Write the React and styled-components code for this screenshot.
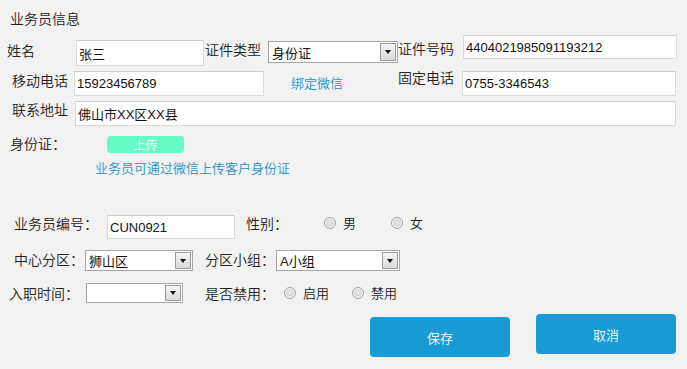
import React from "react";
import styled, { createGlobalStyle } from "styled-components";

const Global = createGlobalStyle`
  html, body { margin: 0; padding: 0; background: #f2f2f2; }
  body { font-family: "Noto Sans CJK SC", "Liberation Sans", sans-serif; }
  * { box-sizing: border-box; }
`;

const Page = styled.div`
  width: 687px;
  height: 369px;
  background: #f2f2f2;
  padding-top: 10px;
  overflow: hidden;
  font-weight: 350;
`;

const Title = styled.div`
  font-size: 14px;
  line-height: 16px;
  color: #222;
  padding-left: 10px;
`;

const Row = styled.div`
  display: flex;
  align-items: flex-start;
  height: ${(p) => p.$h}px;
  margin-top: ${(p) => p.$mt || 0}px;
  padding-left: ${(p) => p.$pl || 0}px;
`;

const Label = styled.div`
  flex: none;
  font-size: 14px;
  line-height: 16px;
  color: #222;
  white-space: nowrap;
  width: ${(p) => p.$w}px;
  margin-left: ${(p) => p.$ml || 0}px;
  margin-top: ${(p) => p.$mt || 0}px;
`;

const TextInput = styled.input`
  flex: none;
  width: ${(p) => p.$w}px;
  height: ${(p) => p.$h}px;
  margin: ${(p) => p.$mt || 0}px 0 0 0;
  border: 1px solid #d9d9d9;
  border-top-color: #cfcfcf;
  background: #fff;
  padding: 0 0 0 2px;
  font-family: "Liberation Sans", "Noto Sans CJK SC", sans-serif;
  font-weight: 400;
  font-size: 13px;
  color: #111;
  outline: none;
`;

const SelectBox = styled.div`
  flex: none;
  width: ${(p) => p.$w}px;
  height: ${(p) => p.$h}px;
  margin-top: ${(p) => p.$mt || 0}px;
  border: 1px solid #a7a7a7;
  background: #fff;
  display: flex;
  align-items: center;
  padding-left: 3px;
  font-family: "Liberation Sans", "Noto Sans CJK SC", sans-serif;
  font-weight: 400;
  font-size: 13px;
  color: #111;
`;

const SelectValue = styled.span`
  flex: 1;
  white-space: nowrap;
`;

const ArrowBtn = styled.span`
  flex: none;
  width: 16px;
  height: calc(100% - 2px);
  margin-right: 1px;
  border: 1px solid #9b9b9b;
  background: linear-gradient(#f6f6f6, #d9d9d9);
  display: flex;
  align-items: center;
  justify-content: center;
  &::after {
    content: "";
    border-left: 3.5px solid transparent;
    border-right: 3.5px solid transparent;
    border-top: 4px solid #111;
  }
`;

const Link = styled.div`
  flex: none;
  font-size: 13px;
  line-height: 16px;
  color: #1f93c8;
  width: ${(p) => p.$w}px;
  margin-left: ${(p) => p.$ml || 0}px;
  margin-top: ${(p) => p.$mt || 0}px;
`;

const Upload = styled.div`
  flex: none;
  width: 77px;
  height: 17px;
  margin-top: ${(p) => p.$mt || 0}px;
  border-radius: 4px;
  background: #68fcc8;
  color: #fff;
  font-size: 12px;
  line-height: 17px;
  text-align: center;
`;

const Hint = styled.div`
  font-size: 13px;
  line-height: 16px;
  color: #1f93c8;
  margin-top: ${(p) => p.$mt}px;
  padding-left: ${(p) => p.$pl}px;
`;

const RadioItem = styled.div`
  flex: none;
  display: flex;
  align-items: center;
  gap: 7px;
  margin-top: ${(p) => p.$mt || 0}px;
  margin-right: ${(p) => p.$mr || 0}px;
  font-size: 13px;
  line-height: 16px;
  color: #222;
`;

const RadioDot = styled.span`
  width: 12px;
  height: 12px;
  border-radius: 50%;
  border: 1px solid #a3a3a3;
  background: radial-gradient(circle at 50% 45%, #ececec 0, #d6d6d6 45%, #f6f6f6 100%);
  box-shadow: inset 0 0 0 1px #fff;
`;

const Btn = styled.button`
  flex: none;
  width: 140px;
  height: 40px;
  margin-top: ${(p) => p.$mt || 0}px;
  margin-right: ${(p) => p.$mr || 0}px;
  border: none;
  border-radius: 4px;
  background: #199bd6;
  color: #fff;
  font-family: "Noto Sans CJK SC", sans-serif;
  font-weight: 350;
  font-size: 13px;
  padding: 0;
`;

function Select({ w, h, mt, value }) {
  return (
    <SelectBox $w={w} $h={h} $mt={mt}>
      <SelectValue>{value}</SelectValue>
      <ArrowBtn />
    </SelectBox>
  );
}

function Radio({ label, mt, mr }) {
  return (
    <RadioItem $mt={mt} $mr={mr}>
      <RadioDot />
      {label}
    </RadioItem>
  );
}

export default function App() {
  return (
    <Page>
      <Global />
      <Title>业务员信息</Title>

      <Row $h={32} $mt={9}>
        <Label $ml={7} $mt={7} $w={69}>姓名</Label>
        <TextInput $w={128} $h={26} $mt={5} readOnly value="张三" />
        <Label $ml={1} $mt={6} $w={63}>证件类型</Label>
        <Select w={130} h={22} mt={6} value="身份证" />
        <Label $mt={5} $w={65}>证件号码</Label>
        <TextInput $w={214} $h={24} readOnly value="4404021985091193212" />
      </Row>

      <Row $h={31}>
        <Label $ml={12} $mt={5} $w={62}>移动电话</Label>
        <TextInput $w={190} $h={25} $mt={4} readOnly value="15923456789" />
        <Link $ml={27} $mt={8} $w={107}>绑定微信</Link>
        <Label $mt={2} $w={64}>固定电话</Label>
        <TextInput $w={214} $h={25} $mt={4} readOnly value="0755-3346543" />
      </Row>

      <Row $h={30}>
        <Label $ml={12} $mt={3} $w={63}>联系地址</Label>
        <TextInput $w={601} $h={25} $mt={3} readOnly value="佛山市XX区XX县" />
      </Row>

      <Row $h={28}>
        <Label $ml={10} $mt={7} $w={97}>身份证：</Label>
        <Upload $mt={8}>上传</Upload>
      </Row>
      <Hint $mt={4} $pl={95}>业务员可通过微信上传客户身份证</Hint>

      <Row $h={35} $mt={37}>
        <Label $ml={14} $mt={2} $w={93}>业务员编号：</Label>
        <TextInput $w={128} $h={24} $mt={2} readOnly value="CUN0921" />
        <Label $ml={11} $mt={2} $w={78}>性别：</Label>
        <Radio label="男" mt={2} mr={35} />
        <Radio label="女" mt={2} />
      </Row>

      <Row $h={33}>
        <Label $ml={14} $mt={3} $w={71}>中心分区：</Label>
        <Select w={108} h={21} mt={2} value="狮山区" />
        <Label $ml={12} $mt={3} $w={71}>分区小组：</Label>
        <Select w={124} h={21} mt={2} value="A小组" />
      </Row>

      <Row $h={33}>
        <Label $ml={9} $mt={4} $w={77}>入职时间：</Label>
        <Select w={97} h={20} mt={2} value="" />
        <Label $ml={22} $mt={4} $w={79}>是否禁用：</Label>
        <Radio label="启用" mt={4} mr={23} />
        <Radio label="禁用" mt={4} />
      </Row>

      <Row $h={43} $pl={370}>
        <Btn $mt={3} $mr={26}>保存</Btn>
        <Btn>取消</Btn>
      </Row>
    </Page>
  );
}
